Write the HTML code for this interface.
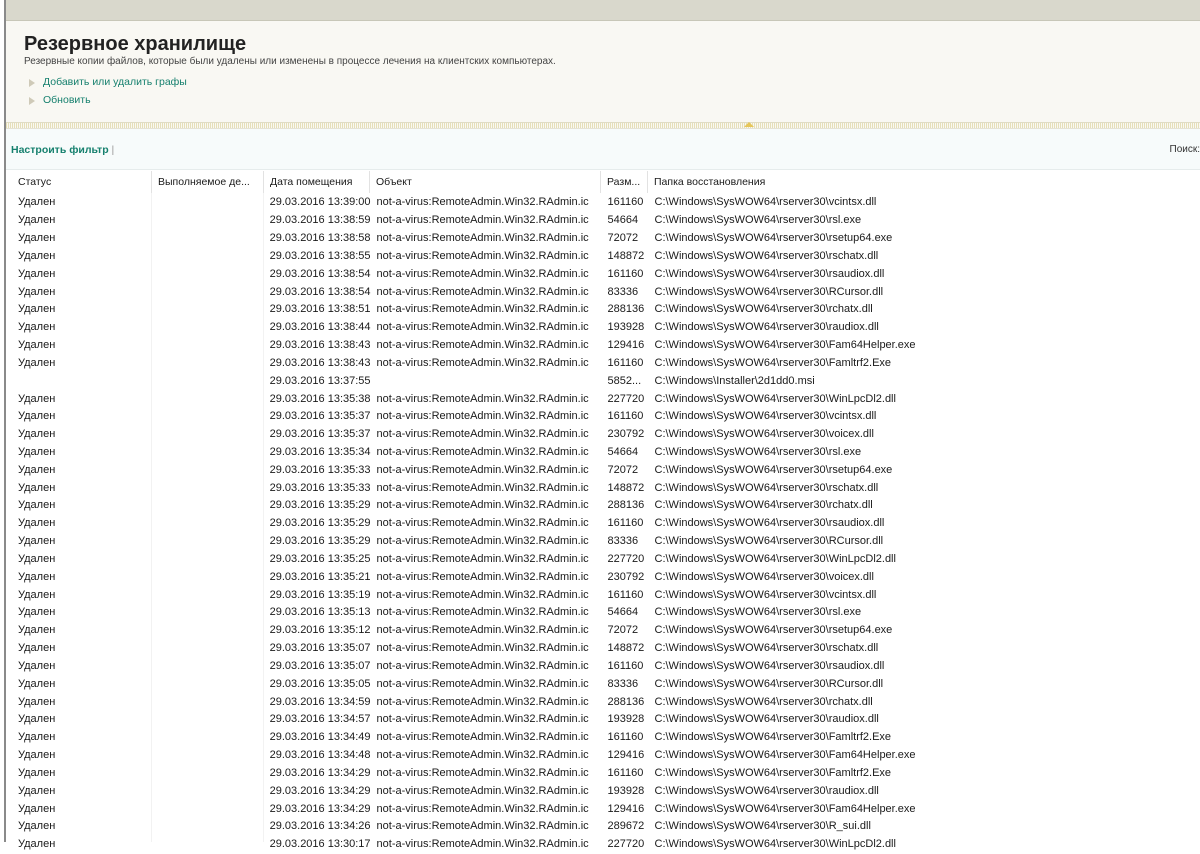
<!DOCTYPE html>
<html><head><meta charset="utf-8"><style>
*{margin:0;padding:0;box-sizing:border-box}
body{width:1200px;height:842px;overflow:hidden;background:#fff;font-family:"Liberation Sans","DejaVu Sans",sans-serif;font-size:11px;color:#1a1a1a;position:relative}
.lb{position:absolute;left:4px;top:0;width:2px;height:842px;background:#8a8a8a}
.top{position:absolute;left:6px;top:0;width:1194px;height:21px;background:#d9d8cc;border-bottom:1px solid #c8c7b8}
.hdr{position:absolute;left:6px;top:21px;width:1194px;height:101px;background:#f9f8f3}
h1{position:absolute;left:18px;top:12px;font-size:20px;font-weight:bold;color:#222}
.sub{position:absolute;left:18px;top:35px;font-size:10px;color:#444}
.lnk{position:absolute;left:37px;font-size:10.5px;color:#16806e}
.tri{position:absolute;left:23px;width:0;height:0;border-left:6px solid #cfcab8;border-top:4px solid transparent;border-bottom:4px solid transparent}
.dots{position:absolute;left:6px;top:122px;width:1194px;height:7px;background:repeating-linear-gradient(90deg,#e6dfb8 0 1px,#f9f8f3 1px 2px);border-top:1px solid #e0dcc4;border-bottom:1px solid #e6e3d4}
.arr{position:absolute;left:744px;top:122px;width:0;height:0;border-left:5px solid transparent;border-right:5px solid transparent;border-bottom:5px solid #e6c65a}
.fb{position:absolute;left:6px;top:129px;width:1194px;height:41px;background:#f7fbfb;border-bottom:1px solid #e6ecec}
.flt{position:absolute;left:5px;top:15px;font-weight:bold;font-size:10.5px;color:#16806e}
.flt span{color:#999;font-weight:normal}
.srch{position:absolute;right:0;top:15px;font-size:10px;color:#333}
.th{position:absolute;top:171px;height:22px;font-size:10.5px;line-height:22px;padding-left:6px;border-right:1px solid #e2e2e2;white-space:nowrap;overflow:hidden}
.vl{position:absolute;top:193px;width:1px;height:649px;background:#f2f2f2}
table{position:absolute;left:12px;top:194px;border-collapse:collapse;table-layout:fixed}
td{height:17.83px;font-size:11px;white-space:nowrap;overflow:hidden;padding-left:6px;line-height:17px}
</style></head><body>
<div class="lb"></div>
<div class="top"></div>
<div class="hdr">
<h1>Резервное хранилище</h1>
<div class="sub">Резервные копии файлов, которые были удалены или изменены в процессе лечения на клиентских компьютерах.</div>
<div class="tri" style="top:58px"></div><div class="lnk" style="top:55px">Добавить или удалить графы</div>
<div class="tri" style="top:76px"></div><div class="lnk" style="top:73px">Обновить</div>
</div>
<div class="dots"></div><div class="arr"></div>
<div class="fb"><div class="flt">Настроить фильтр <span>|</span></div><div class="srch">Поиск:</div></div>
<div class="th" style="left:12px;width:140px">Статус</div>
<div class="th" style="left:152px;width:112px">Выполняемое де...</div>
<div class="th" style="left:264px;width:106px">Дата помещения</div>
<div class="th" style="left:370px;width:231px">Объект</div>
<div class="th" style="left:601px;width:47px">Разм...</div>
<div class="th" style="left:648px;width:400px;border-right:none">Папка восстановления</div>
<div class="vl" style="left:151px"></div><div class="vl" style="left:263px"></div>
<table id="t"><colgroup><col style="width:140px"><col style="width:112px"><col style="width:106px"><col style="width:231px"><col style="width:47px"><col style="width:552px"></colgroup>
<tbody id="b"></tbody></table>
<script>
var d=[["29.03.2016 13:39:00","161160","vcintsx.dll"],["29.03.2016 13:38:59","54664","rsl.exe"],["29.03.2016 13:38:58","72072","rsetup64.exe"],["29.03.2016 13:38:55","148872","rschatx.dll"],["29.03.2016 13:38:54","161160","rsaudiox.dll"],["29.03.2016 13:38:54","83336","RCursor.dll"],["29.03.2016 13:38:51","288136","rchatx.dll"],["29.03.2016 13:38:44","193928","raudiox.dll"],["29.03.2016 13:38:43","129416","Fam64Helper.exe"],["29.03.2016 13:38:43","161160","Famltrf2.Exe"],["29.03.2016 13:37:55","5852...","X"],["29.03.2016 13:35:38","227720","WinLpcDl2.dll"],["29.03.2016 13:35:37","161160","vcintsx.dll"],["29.03.2016 13:35:37","230792","voicex.dll"],["29.03.2016 13:35:34","54664","rsl.exe"],["29.03.2016 13:35:33","72072","rsetup64.exe"],["29.03.2016 13:35:33","148872","rschatx.dll"],["29.03.2016 13:35:29","288136","rchatx.dll"],["29.03.2016 13:35:29","161160","rsaudiox.dll"],["29.03.2016 13:35:29","83336","RCursor.dll"],["29.03.2016 13:35:25","227720","WinLpcDl2.dll"],["29.03.2016 13:35:21","230792","voicex.dll"],["29.03.2016 13:35:19","161160","vcintsx.dll"],["29.03.2016 13:35:13","54664","rsl.exe"],["29.03.2016 13:35:12","72072","rsetup64.exe"],["29.03.2016 13:35:07","148872","rschatx.dll"],["29.03.2016 13:35:07","161160","rsaudiox.dll"],["29.03.2016 13:35:05","83336","RCursor.dll"],["29.03.2016 13:34:59","288136","rchatx.dll"],["29.03.2016 13:34:57","193928","raudiox.dll"],["29.03.2016 13:34:49","161160","Famltrf2.Exe"],["29.03.2016 13:34:48","129416","Fam64Helper.exe"],["29.03.2016 13:34:29","161160","Famltrf2.Exe"],["29.03.2016 13:34:29","193928","raudiox.dll"],["29.03.2016 13:34:29","129416","Fam64Helper.exe"],["29.03.2016 13:34:26","289672","R_sui.dll"],["29.03.2016 13:30:17","227720","WinLpcDl2.dll"]];
var h="";d.forEach(function(r){var x=r[2]=="X";h+="<tr><td>"+(x?"":"Удален")+"</td><td></td><td>"+r[0]+"</td><td>"+(x?"":"not-a-virus:RemoteAdmin.Win32.RAdmin.ic")+"</td><td>"+r[1]+"</td><td>"+(x?"C:\\Windows\\Installer\\2d1dd0.msi":"C:\\Windows\\SysWOW64\\rserver30\\"+r[2])+"</td></tr>";});
document.getElementById("b").innerHTML=h;
</script>
</body></html>
